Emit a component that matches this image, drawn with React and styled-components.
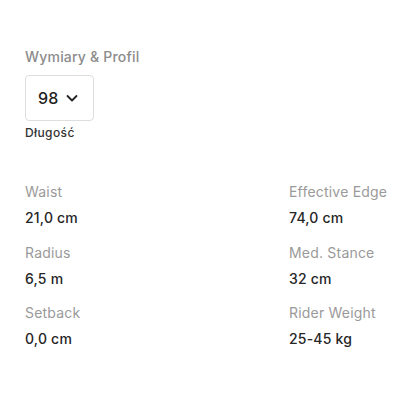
import React from 'react'
import styled, { createGlobalStyle } from 'styled-components'

const Global = createGlobalStyle`
  body {
    margin: 0;
    background: #fff;
    font-family: Inter, "Noto Sans", sans-serif;
    letter-spacing: 0.2px;
  }
`

const Page = styled.div`
  width: 400px;
  height: 400px;
  padding: 48px 25px 0 25px;
  box-sizing: border-box;
`

const Title = styled.div`
  font-size: 14px;
  font-weight: 500;
  color: #8c8c8c;
  line-height: 18px;
  white-space: nowrap;
`

const Select = styled.div`
  margin-top: 9px;
  width: 69px;
  height: 46px;
  box-sizing: border-box;
  border: 1px solid #dedede;
  border-radius: 4px;
  display: flex;
  align-items: center;
  gap: 6px;
  padding-left: 12px;
  font-size: 16px;
  font-weight: 500;
  color: #222;
`

const Caption = styled.div`
  margin-top: 5px;
  font-size: 12px;
  font-weight: 500;
  color: #333;
  line-height: 14px;
  letter-spacing: 0.4px;
`

const Specs = styled.div`
  margin-top: 43px;
  display: grid;
  grid-template-columns: 264px 1fr;
  row-gap: 16.5px;
`

const Spec = styled.div`
  display: flex;
  flex-direction: column;
  gap: 8px;
  white-space: nowrap;
`

const Label = styled.div`
  font-size: 14px;
  color: #9a9a9a;
  line-height: 18px;
`

const Value = styled.div`
  font-size: 14px;
  font-weight: 500;
  color: #262626;
  line-height: 18px;
`

const specs = [
  ['Waist', '21,0 cm'],
  ['Effective Edge', '74,0 cm'],
  ['Radius', '6,5 m'],
  ['Med. Stance', '32 cm'],
  ['Setback', '0,0 cm'],
  ['Rider Weight', '25-45 kg'],
]

const Chevron = () => (
  <svg width="14" height="14" viewBox="0 0 14 14" fill="none">
    <path d="M2.5 5l4.5 4.5 4.5-4.5" stroke="#222" strokeWidth="1.8" strokeLinecap="round" strokeLinejoin="round" />
  </svg>
)

export default function App() {
  return (
    <>
      <Global />
      <Page>
        <Title>Wymiary &amp; Profil</Title>
        <Select>
          <span>98</span>
          <Chevron />
        </Select>
        <Caption>Długość</Caption>
        <Specs>
          {specs.map(([label, value]) => (
            <Spec key={label}>
              <Label>{label}</Label>
              <Value>{value}</Value>
            </Spec>
          ))}
        </Specs>
      </Page>
    </>
  )
}
